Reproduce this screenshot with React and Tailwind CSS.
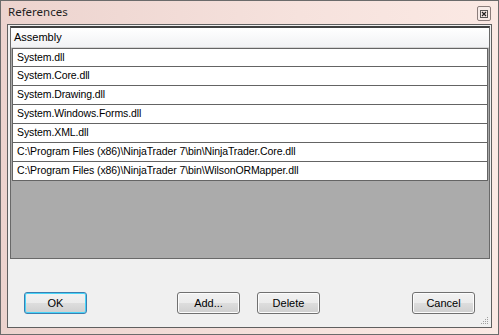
import React from "react";

const rows = [
  "System.dll",
  "System.Core.dll",
  "System.Drawing.dll",
  "System.Windows.Forms.dll",
  "System.XML.dll",
  "C:\\Program Files (x86)\\NinjaTrader 7\\bin\\NinjaTrader.Core.dll",
  "C:\\Program Files (x86)\\NinjaTrader 7\\bin\\WilsonORMapper.dll",
];

function Btn({ children, def, className = "" }) {
  return (
    <div
      className={
        "h-[22px] w-[63px] rounded-[3px] border flex items-center justify-center text-[11px] text-black " +
        (def
          ? "border-[#3c7fb1] shadow-[inset_0_0_0_1px_#48d4f8] "
          : "border-[#707070] shadow-[inset_0_0_0_1px_#fcfcfc] ") +
        "bg-[linear-gradient(#f2f2f2_0%,#ebebeb_50%,#dddddd_51%,#cfcfcf_100%)] " +
        className
      }
    >
      {children}
    </div>
  );
}

export default function App() {
  return (
    <div
      className="w-[499px] h-[335px] border border-[#6b6b6b] bg-[linear-gradient(90deg,#ecd3ce,#f6e2dd_60%,#fbe9e4)] flex flex-col"
      style={{ fontFamily: '"Liberation Sans", Arial, sans-serif' }}
    >
      <div className="h-[23px] flex items-center pl-[7px] pr-[7px] shrink-0">
        <div
          className="text-[11.5px] text-[#1e1e1e] flex-1 -mt-[1px]"
          style={{ fontFamily: '"Noto Sans", "Open Sans", sans-serif' }}
        >
          References
        </div>
        <div className="w-[14px] h-[15px] border border-[#8b7d7b] rounded-[2px] bg-[#f7ebe8] flex items-center justify-center mt-[2px]">
          <svg width="8" height="8" viewBox="0 0 8 8">
            <rect x="0.5" y="0.5" width="7" height="7" fill="none" stroke="#555" strokeWidth="1" />
            <path d="M2 2 L6 6 M6 2 L2 6" stroke="#222" strokeWidth="1.2" />
          </svg>
        </div>
      </div>
      <div className="relative mx-[6px] mb-[6px] flex-1 border border-[#5f5f5f] bg-[#f0f0f0] flex flex-col">
        <div className="mt-[1px] ml-[2px] mr-[1px] h-[233px] border border-[#696969] border-t-2 border-t-[#404040] bg-[#ababab] flex flex-col shrink-0">
          <div className="h-[20px] border-b border-[#d5d5d5] bg-[linear-gradient(#ffffff,#f1f2f4)] flex items-center pl-[3px] text-[11px] text-black">
            Assembly
          </div>
          <div className="pl-[1px] pr-[1px]">
            {rows.map((r, i) => (
              <div
                key={i}
                className={
                  "h-[19px] bg-white border-x border-b border-[#646464] flex items-center pl-[4px] text-[10.5px] tracking-[-0.1px] text-black " +
                  (i === 0 ? "border-t" : "")
                }
              >
                {r}
              </div>
            ))}
          </div>
        </div>
        <div className="flex-1 flex items-start pt-[33px] pl-[16px]">
          <Btn def>OK</Btn>
          <Btn className="ml-[90px]">Add...</Btn>
          <Btn className="ml-[17px]">Delete</Btn>
          <Btn className="ml-[92px]">Cancel</Btn>
        </div>
        <svg className="absolute right-[2px] bottom-[2px]" width="8" height="8" viewBox="0 0 8 8">
          <rect x="6" y="0" width="1" height="1" fill="#a0a0a0" />
          <rect x="4" y="2" width="1" height="1" fill="#a0a0a0" />
          <rect x="6" y="2" width="1" height="1" fill="#a0a0a0" />
          <rect x="2" y="4" width="1" height="1" fill="#a0a0a0" />
          <rect x="4" y="4" width="1" height="1" fill="#a0a0a0" />
          <rect x="6" y="4" width="1" height="1" fill="#a0a0a0" />
          <rect x="0" y="6" width="1" height="1" fill="#a0a0a0" />
          <rect x="2" y="6" width="1" height="1" fill="#a0a0a0" />
          <rect x="4" y="6" width="1" height="1" fill="#a0a0a0" />
          <rect x="6" y="6" width="1" height="1" fill="#a0a0a0" />
        </svg>
      </div>
    </div>
  );
}
